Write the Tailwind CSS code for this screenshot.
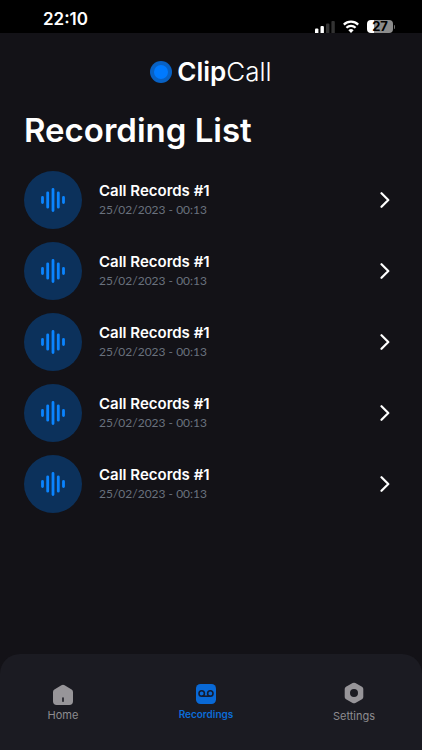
<!DOCTYPE html>
<html lang="en">
<head>
<meta charset="utf-8">
<meta name="viewport" content="width=device-width, initial-scale=1">
<title>ClipCall</title>
<script src="https://cdn.jsdelivr.net/npm/@tailwindcss/browser@4"></script>
</head>
<body class="flex min-h-screen flex-col bg-[#131217] font-['Inter',sans-serif] text-white">
<svg class="hidden" aria-hidden="true">
  <symbol id="wave" viewBox="0 0 24 24"><path d="M1.5 9.500v5M6.700 4.800v14.400M12 1.500v21M17.300 4.800v14.400M22.500 9.500v5" fill="none" stroke="#0a84ff" stroke-width="2.800" stroke-linecap="round"/></symbol>
  <symbol id="chevron" viewBox="0 0 10 16"><path d="M1.500 1.200 8.300 8 1.500 14.800" fill="none" stroke="#fff" stroke-width="2.200" stroke-linecap="round" stroke-linejoin="round"/></symbol>
</svg>

<div class="flex h-[33px] items-end justify-between overflow-hidden bg-black pr-[27px] pl-[43px]">
  <span class="pb-1 text-[17px] leading-[20px] font-semibold">22:10</span>
  <div class="flex items-end gap-2">
    <svg class="h-3 w-5" viewBox="0 0 20 12" aria-label="Signal"><rect x="0" y="7.500" width="3.400" height="6" rx="1" fill="#fff"/><rect x="5.500" y="5" width="3.400" height="9" rx="1" fill="#fff"/><rect x="11" y="2.500" width="3.400" height="11" rx="1" fill="#333"/><rect x="16.400" y="0" width="3.400" height="14" rx="1" fill="#333"/></svg>
    <svg class="h-[13px] w-4" viewBox="0 0 16 13" aria-label="Wi-Fi"><g fill="none" stroke="#fff" stroke-width="2.200"><path d="M.8 4.600a10.400 10.400 0 0 1 14.400 0"/><path d="M3.400 7.700a6.700 6.700 0 0 1 9.200 0"/></g><path d="M5.400 10.300a3.800 3.800 0 0 1 5.200 0L8 13Z" fill="#fff"/></svg>
    <div class="flex items-center gap-px">
      <div class="flex h-[13px] w-[26px] items-center justify-center rounded bg-linear-to-r from-white from-28% to-[#8c8c8c] to-28% text-[13px] leading-none font-bold text-black">27</div>
      <div class="h-1 w-px rounded-r bg-[#6c6c6c]"></div>
    </div>
  </div>
</div>

<header class="flex h-[77px] items-center justify-center gap-[5px] text-[26px] leading-8">
  <svg class="size-[22px]" viewBox="0 0 22 22" aria-hidden="true"><circle cx="11" cy="11" r="11" fill="#0861c4"/><circle cx="11" cy="11" r="7" fill="#007aff"/></svg>
  <span><b class="font-semibold">Clip</b><span class="font-light">Call</span></span>
</header>

<main class="flex-1 px-6">
  <h1 class="text-[33px] leading-10 font-semibold">Recording List</h1>
  <ul class="mt-[21px] flex flex-col gap-[13px]">
    <li><a href="#" class="flex items-center pr-2"><span class="flex size-[58px] items-center justify-center rounded-full bg-[#0c315b]"><svg class="size-6"><use href="#wave"/></svg></span><span class="ml-[17px] flex flex-1 flex-col"><span class="text-[15px] leading-5 font-semibold">Call Records #1</span><span class="font-['Lato',sans-serif] text-[12px] leading-[18px] text-[#69717d]">25/02/2023 - 00:13</span></span><svg class="h-4 w-2.5"><use href="#chevron"/></svg></a></li>
    <li><a href="#" class="flex items-center pr-2"><span class="flex size-[58px] items-center justify-center rounded-full bg-[#0c315b]"><svg class="size-6"><use href="#wave"/></svg></span><span class="ml-[17px] flex flex-1 flex-col"><span class="text-[15px] leading-5 font-semibold">Call Records #1</span><span class="font-['Lato',sans-serif] text-[12px] leading-[18px] text-[#69717d]">25/02/2023 - 00:13</span></span><svg class="h-4 w-2.5"><use href="#chevron"/></svg></a></li>
    <li><a href="#" class="flex items-center pr-2"><span class="flex size-[58px] items-center justify-center rounded-full bg-[#0c315b]"><svg class="size-6"><use href="#wave"/></svg></span><span class="ml-[17px] flex flex-1 flex-col"><span class="text-[15px] leading-5 font-semibold">Call Records #1</span><span class="font-['Lato',sans-serif] text-[12px] leading-[18px] text-[#69717d]">25/02/2023 - 00:13</span></span><svg class="h-4 w-2.5"><use href="#chevron"/></svg></a></li>
    <li><a href="#" class="flex items-center pr-2"><span class="flex size-[58px] items-center justify-center rounded-full bg-[#0c315b]"><svg class="size-6"><use href="#wave"/></svg></span><span class="ml-[17px] flex flex-1 flex-col"><span class="text-[15px] leading-5 font-semibold">Call Records #1</span><span class="font-['Lato',sans-serif] text-[12px] leading-[18px] text-[#69717d]">25/02/2023 - 00:13</span></span><svg class="h-4 w-2.5"><use href="#chevron"/></svg></a></li>
    <li><a href="#" class="flex items-center pr-2"><span class="flex size-[58px] items-center justify-center rounded-full bg-[#0c315b]"><svg class="size-6"><use href="#wave"/></svg></span><span class="ml-[17px] flex flex-1 flex-col"><span class="text-[15px] leading-5 font-semibold">Call Records #1</span><span class="font-['Lato',sans-serif] text-[12px] leading-[18px] text-[#69717d]">25/02/2023 - 00:13</span></span><svg class="h-4 w-2.5"><use href="#chevron"/></svg></a></li>
  </ul>
</main>

<nav class="flex justify-between rounded-t-[20px] bg-[#1b1b22] px-[31px] pt-7 pb-[26px] text-[11px] leading-4 text-[#8d8c90]">
  <a href="#" class="flex w-16 flex-col items-center gap-px pt-0.5">
    <svg class="size-[22px]" viewBox="0 0 22 22" aria-hidden="true"><path d="M9.400 1.300q1.600-.9 3.200 0l7 4.100q1.400.8 1.400 2.500v9.400q0 3.700-3.700 3.700H4.700Q1 21 1 17.300V7.900Q1 6.200 2.400 5.400Z" fill="#979599"/><path d="M11 14v3.200" stroke="#1b1b22" stroke-width="1.600" stroke-linecap="round"/></svg>
    <span>Home</span>
  </a>
  <a href="#" class="flex w-16 flex-col items-center gap-px pt-px text-[10px] font-semibold text-[#0c6cd8]" aria-current="page">
    <svg class="size-[22px]" viewBox="0 0 22 22" aria-hidden="true"><rect x="1" y="1" width="20" height="20" rx="4.500" fill="#0969d6"/><g fill="none" stroke="#141c30" stroke-width="1.600"><circle cx="6.700" cy="10.500" r="2.700"/><circle cx="15.300" cy="10.500" r="2.700"/><path d="M6.700 13.200h8.600"/></g></svg>
    <span>Recordings</span>
  </a>
  <a href="#" class="flex w-[74px] flex-col items-center gap-1">
    <svg class="size-[22px]" viewBox="0 0 22 22" aria-hidden="true"><path fill-rule="evenodd" d="M9.600 1.100q1.400-.8 2.800 0l6.600 3.700q1.300.8 1.300 2.300v7.800q0 1.500-1.300 2.300l-6.600 3.700q-1.400.8-2.800 0L3 17.200q-1.300-.8-1.300-2.300V7.100Q1.700 5.600 3 4.800ZM11 7a4 4 0 1 0 0 8 4 4 0 0 0 0-8Z" fill="#979599"/></svg>
    <span>Settings</span>
  </a>
</nav>
</body>
</html>
